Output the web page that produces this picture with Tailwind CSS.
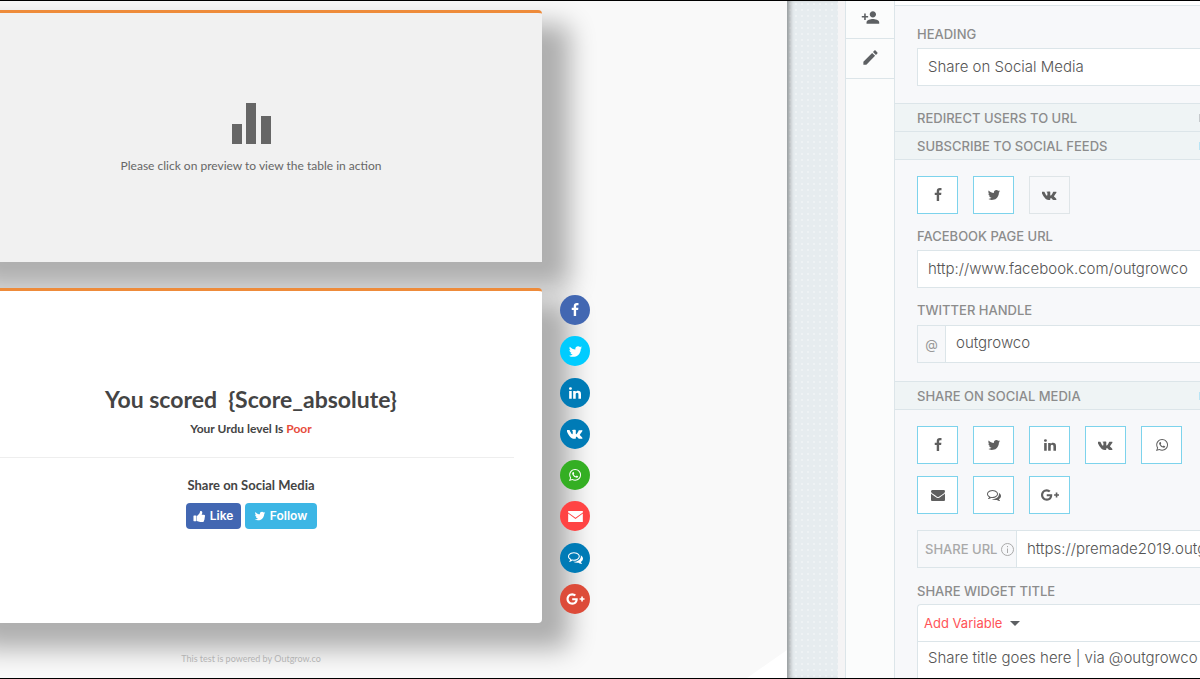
<!DOCTYPE html>
<html lang="en">
<head>
<meta charset="utf-8">
<title>Quiz builder</title>
<script src="https://cdn.jsdelivr.net/npm/@tailwindcss/browser@4"></script>
</head>
<body class="bg-black">
<svg class="hidden" aria-hidden="true">
  <symbol id="facebook" viewBox="0 0 1792 1792"><path d="M1343 12v264h-157q-86 0-116 36t-30 108v189h293l-39 296h-254v759h-306v-759h-255v-296h255v-218q0-186 104-288.5t277-102.5q147 0 228 12z"/></symbol>
  <symbol id="twitter" viewBox="0 0 1792 1792"><path d="M1684 408q-67 98-162 167 1 14 1 42 0 130-38 259.5t-115.5 248.5-184.5 210.5-258 146-323 54.5q-271 0-496-145 35 4 78 4 225 0 401-138-105-2-188-64.5t-114-159.5q33 5 61 5 43 0 85-11-112-23-185.5-111.5t-73.5-205.5v-4q68 38 146 41-66-44-105-115t-39-154q0-88 44-163 121 149 294.5 238.5t371.5 99.5q-8-38-8-74 0-134 94.5-228.5t228.5-94.5q140 0 236 102 109-21 205-78-37 115-142 178 93-10 186-50z"/></symbol>
  <symbol id="linkedin" viewBox="0 0 1792 1792"><path d="M477 625v991h-330v-991h330zm21-306q1 73-50.5 122t-135.5 49h-2q-82 0-132-49t-50-122q0-74 51.5-122.5t134.5-48.5 133 48.5 51 122.5zm1166 729v568h-329v-530q0-105-40.5-164.5t-126.5-59.5q-63 0-105.5 34.5t-63.5 85.5q-11 30-11 81v553h-329q2-399 2-647t-1-296l-1-48h329v144h-2q20-32 41-56t56.5-52 87-43.5 114.5-15.5q171 0 275 113.5t104 332.5z"/></symbol>
  <symbol id="vk" viewBox="0 0 1920 1792"><path d="M1853 520q23 64-150 294-24 32-65 85-78 100-90 131-17 41 14 81 17 21 81 82h1l1 1 1 1 2 2q141 131 191 221 3 5 6.5 12.5t7 26.5-.5 34-25 27.5-59 12.5l-256 4q-24 5-56-5t-52-22l-20-12q-30-21-70-64t-68.5-77.5-61-58-56.5-15.5q-3 1-8 3.5t-17 14.5-21.5 29.5-17 52-6.5 77.5q0 15-3.5 27.5t-7.5 18.5l-4 5q-18 19-53 22h-115q-71 4-146-16.5t-131.5-53-103-66-70.5-57.5l-25-24q-10-10-27.5-30t-71.5-91-106-151-122.5-211-130.5-272q-6-16-6-27t3-16l4-6q15-19 57-19l274-2q12 2 23 6.5t16 8.5l5 3q16 11 24 32 20 50 46 103.5t41 81.5l16 29q29 60 56 104t48.5 68.5 41.5 38.5 34 14 27-5q2-1 5-5t12-22 13.5-47 9.5-81 0-125q-2-40-9-73t-14-46l-6-12q-25-34-85-43-13-2 5-24 16-19 38-30 53-26 239-24 82 1 135 13 20 5 33.5 13.5t20.5 24 10.5 32 3.5 45.5-1 55-2.5 70.5-1.5 82.5q0 11-1 42t-.5 48 3.5 40.5 11.5 39 22.5 24.5q8 2 17 4t26-11 38-34.5 52-67 68-107.5q60-104 107-225 4-10 10-17.5t11-10.5l4-3 5-2.5 13-3 20-.5 288-2q39-5 64 2.5t31 16.5z"/></symbol>
  <symbol id="whatsapp" viewBox="0 0 1792 1792"><path d="M1113 974q13 0 97.5 44t89.5 53q2 5 2 15 0 33-17 76-16 39-71 65.5t-102 26.5q-57 0-190-62-98-45-170-118t-148-185q-72-107-71-194v-8q3-91 74-158 24-22 52-22 6 0 18 1.5t19 1.5q19 0 26.5 6.5t15.5 27.5q8 20 33 88t25 75q0 21-34.5 57.5t-34.5 46.5q0 7 5 15 34 73 102 137 56 53 151 101 12 7 22 7 15 0 54-48.5t52-48.5zm-203 530q127 0 243.5-50t200.5-134 134-200.5 50-243.5-50-243.5-134-200.5-200.5-134-243.5-50-243.5 50-200.5 134-134 200.5-50 243.5q0 203 120 368l-79 233 242-77q158 104 345 104zm0-1382q153 0 292.5 60t240.5 161 161 240.5 60 292.5-60 292.5-161 240.5-240.5 161-292.5 60q-195 0-365-94l-417 134 136-405q-108-178-108-389 0-153 60-292.5t161-240.5 240.5-161 292.5-60z"/></symbol>
  <symbol id="envelope" viewBox="0 0 1792 1792"><path d="M1792 710v794q0 66-47 113t-113 47h-1472q-66 0-113-47t-47-113v-794q44 49 101 87 362 246 497 345 57 42 92.5 65.5t94.5 48 110 24.5h2q51 0 110-24.5t94.5-48 92.5-65.5q170-123 498-345 57-39 100-87zm0-294q0 79-49 151t-122 123q-376 261-468 325-10 7-42.5 30.5t-54 38-52 32.5-57.5 27-50 9h-2q-23 0-50-9t-57.5-27-52-32.5-54-38-42.5-30.5q-91-64-262-182.5t-205-142.5q-62-42-117-115.5t-55-136.5q0-78 41.5-130t118.5-52h1472q65 0 112.5 47t47.5 113z"/></symbol>
  <symbol id="mail" viewBox="0 0 16 12"><path d="M0 0h16v1.500L8 7.300 0 1.500zM0 2.800 8 8.600l8-5.800V12H0z"/></symbol>
  <symbol id="comments" viewBox="0 0 1792 1792"><path d="M704 384q-153 0-286 52t-211.500 141-78.500 191q0 82 53 158t149 132l97 56-35 84q34-20 62-39l44-31 53 10q78 14 153 14 153 0 286-52t211.500-141 78.500-191-78.500-191-211.500-141-286-52zm0-128q191 0 353.500 68.500t256.500 186.500 94 257-94 257-256.500 186.500-353.500 68.500q-86 0-176-16-124 88-278 128-36 9-86 16h-3q-11 0-20.500-8t-11.500-21q-1-3-1-6.500t.5-6.500 2-6l2.500-5 3.500-5.500 4-5 4.500-5 4-4.500q5-6 23-25t26-29.500 22.500-29 25-38.500 20.500-44q-124-72-195-177t-71-224q0-139 94-257t256.500-186.500 353.500-68.500zm822 1169q10 24 20.500 44t25 38.500 22.500 29 26 29.500 23 25q1 1 4 4.500t4.500 5 4 5 3.500 5.500l2.500 5 2 6 .5 6.500-1 6.500q-3 14-13 22t-22 7q-50-7-86-16-154-40-278-128-90 16-176 16-271 0-472-132 58 4 88 4 161 0 309-45t264-129q125-92 192-212t67-254q0-77-23-152 129 71 204 178t75 230q0 120-71 224.500t-195 176.500z"/></symbol>
  <symbol id="gplus" viewBox="0 0 2304 1792"><path d="M1437 913q0 208-87 370.500t-248 254-369 91.500q-149 0-285-58t-234-156-156-234-58-285 58-285 156-234 234-156 285-58q286 0 491 192l-199 191q-117-113-292-113-123 0-227.500 62t-165.500 168.500-61 232.500 61 232.500 165.500 168.500 227.500 62q83 0 152.500-23t114.500-57.500 78.500-78.500 49-83 21.500-74h-416v-252h692q12 63 12 122zm867-122v210h-209v209h-210v-209h-209v-210h209v-209h210v209h209z"/></symbol>
  <symbol id="thumb" viewBox="0 0 1792 1792"><path d="M480 832v640q0 26-19 45t-45 19h-288q-26 0-45-19t-19-45v-640q0-26 19-45t45-19h288q26 0 45 19t19 45zm1184 0q0 86-55 149 15 44 15 76 3 76-43 137 17 56 0 117-15 57-54 94 9 112-49 181-64 76-197 78h-129q-66 0-144-15.500t-121.500-29-120.500-39.500q-123-43-158-44-26-1-45-19.500t-19-44.500v-641q0-25 18-43.500t43-20.500q24-2 76-59t101-121q68-87 101-120 18-18 31-48t17.500-48.500 13.500-60.500q7-39 12.500-61t19.500-52 34-50q19-19 45-19 46 0 82.500 10.500t60 26 40 40.500 24 45 12 50 5 45 .5 39q0 38-9.500 76t-19 60-27.500 56q-3 6-10 18t-11 22-8 24h277q78 0 135 57t57 135z"/></symbol>
</svg>

<div class="flex h-screen overflow-hidden border-y border-black font-['Inter',sans-serif]">

  <!-- Quiz preview -->
  <main class="relative z-10 flex min-w-0 flex-1 flex-col overflow-hidden bg-[#f9f9f9] pt-[9px] font-['Lato','Open_Sans',sans-serif]">
    <div class="absolute right-0 bottom-0 h-7 w-10 bg-white [clip-path:polygon(100%_0,100%_100%,0_100%)]"></div>
    <div class="mr-[245px] -ml-10">
      <section class="flex h-[252px] flex-col items-center rounded-t-sm border-t-3 border-[#ee8b3a] bg-[#f1f1f1] pt-[90px] shadow-[22px_20px_26px_6px_rgba(0,0,0,0.3)]">
        <svg class="h-[42px] w-10 fill-[#666]" viewBox="0 0 40 42"><path d="M1 21h10v20H1zM15 0h10v41H15zM30 13h10v28H30z"/></svg>
        <p class="mt-[11px] text-[12px] leading-5 text-[#666]">Please click on preview to view the table in action</p>
      </section>
    </div>
    <div class="mt-[26px] mr-[197px] -ml-10 flex gap-[18px]">
      <section class="flex h-[335px] flex-1 flex-col items-center rounded-sm border-t-3 border-[#ee8b3a] bg-white pt-[92px] text-[#444] shadow-[22px_20px_26px_6px_rgba(0,0,0,0.3)]">
        <h1 class="text-[23px] leading-8 font-bold whitespace-pre">You scored  {Score_absolute}</h1>
        <p class="mt-1 text-[12px] leading-5 font-bold">Your Urdu level Is <span class="text-[#e74c3c]">Poor</span></p>
        <div class="mt-[18px] w-full pr-7"><hr class="border-[#eee]"></div>
        <h2 class="mt-[17px] text-[13px] leading-5 font-bold">Share on Social Media</h2>
        <div class="mt-2 flex gap-1 font-['Inter',sans-serif] text-[12px] font-semibold text-white">
          <button class="flex h-[26px] w-[55px] items-center justify-center gap-1 rounded-sm bg-[#4267b2]"><svg class="size-[13px] fill-current"><use href="#thumb"/></svg>Like</button>
          <button class="flex h-[26px] w-[72px] items-center justify-center gap-1 rounded-sm bg-[#3cb6e5]"><svg class="size-3 fill-current"><use href="#twitter"/></svg>Follow</button>
        </div>
      </section>
      <nav aria-label="Share" class="relative flex w-[30px] flex-col justify-between pt-[7px] pb-[9px] *:flex *:size-[30px] *:items-center *:justify-center *:rounded-full *:text-white">
        <button aria-label="Facebook" class="bg-[#4267b2]"><svg class="size-[14px] fill-current"><use href="#facebook"/></svg></button>
        <button aria-label="Twitter" class="bg-[#00ccff]"><svg class="size-[15px] fill-current"><use href="#twitter"/></svg></button>
        <button aria-label="LinkedIn" class="bg-[#007bb6]"><svg class="size-[14px] fill-current"><use href="#linkedin"/></svg></button>
        <button aria-label="VK" class="bg-[#007bb6]"><svg class="h-[15px] w-4 fill-current"><use href="#vk"/></svg></button>
        <button aria-label="WhatsApp" class="bg-[#34af23]"><svg class="size-[14px] fill-current"><use href="#whatsapp"/></svg></button>
        <button aria-label="Email" class="bg-[#ff4444]"><svg class="h-[11px] w-[15px] fill-current"><use href="#mail"/></svg></button>
        <button aria-label="SMS" class="bg-[#007bb6]"><svg class="size-[15px] fill-current"><use href="#comments"/></svg></button>
        <button aria-label="Google Plus" class="bg-[#dd4b39]"><svg class="h-[14px] w-[19px] fill-current"><use href="#gplus"/></svg></button>
      </nav>
    </div>
    <footer class="relative mt-[26px] mr-[245px] -ml-10 text-center text-[9px] leading-5 text-[#b3b3b3]">This test is powered by Outgrow.co</footer>
  </main>

  <!-- Builder canvas edge -->
  <div class="w-[51px] shrink-0 bg-[#e6ecef] bg-[radial-gradient(circle,#eef2f4_1px,transparent_1px)] bg-size-[6px_6px] shadow-[inset_5px_0_4px_-2px_rgba(0,0,0,0.35)]"></div>
  <div class="w-[7px] shrink-0 bg-[#f5f4f5]"></div>

  <!-- Tool rail -->
  <nav aria-label="Tools" class="w-[50px] shrink-0 border-x border-[#dce5e9] bg-[#fbfcfc]">
    <button aria-label="Add user" class="flex h-[38px] w-full items-center justify-center border-b border-[#dce5e9]"><svg class="mb-1 size-[19px] fill-[#5d6063]" viewBox="0 0 24 24"><path d="M15 12c2.210 0 4-1.790 4-4s-1.790-4-4-4-4 1.790-4 4 1.790 4 4 4zm-9-2V7H4v3H1v2h3v3h2v-3h3v-2H6zm9 4c-2.670 0-8 1.340-8 4v2h16v-2c0-2.660-5.330-4-8-4z"/></svg></button>
    <button aria-label="Edit" class="flex h-10 w-full items-center justify-center border-b border-[#dce5e9] pb-[2px]"><svg class="size-[19px] fill-[#5d6063]" viewBox="0 0 24 24"><path d="M3 17.250V21h3.750L17.810 9.940l-3.750-3.750L3 17.250zM20.710 7.040c.39-.39.39-1.020 0-1.410l-2.340-2.340c-.39-.39-1.020-.39-1.410 0l-1.830 1.830 3.750 3.750 1.830-1.830z"/></svg></button>
  </nav>

  <!-- Settings panel -->
  <aside class="w-[305px] shrink-0 overflow-hidden border-t-4 border-white bg-[#f7f8fa] text-[13px] leading-4 font-medium text-[#8c8c8c]">
    <div class="border-t border-[#dce5e9] pt-5 pl-[22px]">
      <label for="heading" class="block">HEADING</label>
      <input id="heading" value="Share on Social Media" class="mt-[6px] block h-[38px] w-full border border-r-0 border-[#dce5e9] bg-white pb-[2px] pl-[10px] text-[15px] font-light text-[#555]">
    </div>
    <h3 class="mt-[17px] flex h-7 items-center justify-between border-t border-[#dce5e9] bg-[#eff4f5] pl-[22px] font-medium">REDIRECT USERS TO URL<span class="h-2 w-px bg-[#c5c9cc]"></span></h3>
    <h3 class="flex h-[29px] items-center justify-between border-y border-[#dce5e9] bg-[#eff4f5] pl-[22px] font-medium">SUBSCRIBE TO SOCIAL FEEDS<span class="h-2 w-px bg-[#b8e4f5]"></span></h3>
    <div class="pt-4 pl-[22px]">
      <div class="flex gap-[15px] text-[#5f5f5f] *:flex *:h-[38px] *:w-[41px] *:items-center *:justify-center *:border">
        <button aria-label="Facebook feed" class="border-[#7dd3ec] bg-white"><svg class="size-[14px] fill-current"><use href="#facebook"/></svg></button>
        <button aria-label="Twitter feed" class="border-[#7dd3ec] bg-white"><svg class="size-[14px] fill-current"><use href="#twitter"/></svg></button>
        <button aria-label="VK feed" class="border-[#dfe5e8]"><svg class="h-[14px] w-[15px] fill-current"><use href="#vk"/></svg></button>
      </div>
      <label for="fb" class="mt-[14px] block">FACEBOOK PAGE URL</label>
      <input id="fb" value="http://www.facebook.com/outgrowco" class="mt-[6px] block h-[38px] w-full border border-r-0 border-[#dce5e9] bg-white pb-[2px] pl-[10px] text-[15px] font-light text-[#555]">
      <label for="tw" class="mt-[14px] block">TWITTER HANDLE</label>
      <div class="mt-[7px] flex h-[38px] border border-r-0 border-[#dce5e9]">
        <span class="flex w-7 items-center justify-center border-r border-[#dce5e9] font-normal text-[#999]">@</span>
        <input id="tw" value="outgrowco" class="min-w-0 flex-1 bg-white pb-[2px] pl-[10px] text-[15px] font-light text-[#555]">
      </div>
    </div>
    <h3 class="mt-[18px] flex h-[29px] items-center justify-between border-y border-[#dce5e9] bg-[#eff4f5] pl-[22px] font-medium">SHARE ON SOCIAL MEDIA<span class="h-2 w-px bg-[#b8e4f5]"></span></h3>
    <div class="pt-4 pl-[22px]">
      <div class="flex flex-wrap gap-x-[15px] gap-y-3 text-[#5f5f5f] *:flex *:h-[38px] *:w-[41px] *:items-center *:justify-center *:border *:border-[#7dd3ec] *:bg-white">
        <button aria-label="Share on Facebook"><svg class="size-[14px] fill-current"><use href="#facebook"/></svg></button>
        <button aria-label="Share on Twitter"><svg class="size-[14px] fill-current"><use href="#twitter"/></svg></button>
        <button aria-label="Share on LinkedIn"><svg class="size-[14px] fill-current"><use href="#linkedin"/></svg></button>
        <button aria-label="Share on VK"><svg class="h-[14px] w-[15px] fill-current"><use href="#vk"/></svg></button>
        <button aria-label="Share on WhatsApp"><svg class="size-[14px] fill-current"><use href="#whatsapp"/></svg></button>
        <button aria-label="Share by email"><svg class="size-[14px] fill-current"><use href="#envelope"/></svg></button>
        <button aria-label="Share by SMS"><svg class="size-[14px] fill-current"><use href="#comments"/></svg></button>
        <button aria-label="Share on Google Plus"><svg class="h-[14px] w-[18px] fill-current"><use href="#gplus"/></svg></button>
      </div>
      <div class="mt-4 flex h-[38px] border border-r-0 border-[#dce5e9]">
        <label for="url" class="flex w-[99px] shrink-0 items-center gap-1 border-r border-[#dce5e9] pl-[7px] text-[#a9a9a9]">SHARE URL<svg class="size-[13px] shrink-0 fill-none stroke-current" viewBox="0 0 13 13"><circle cx="6.500" cy="6.500" r="6"/><path d="M6.500 5.500v4.500M6.500 3v1.200"/></svg></label>
        <input id="url" value="https://premade2019.outgrow.us" class="min-w-0 flex-1 bg-white pl-[10px] text-[15px] font-light text-[#555]">
      </div>
      <label for="title" class="mt-[15px] block">SHARE WIDGET TITLE</label>
      <div class="mt-[5px] rounded-tl-sm border border-r-0 border-[#dce5e9] bg-white">
        <button class="flex h-9 items-center gap-2 pl-[6px] font-normal text-[#ff5358]">Add Variable<svg class="h-[5px] w-[10px] fill-[#5d6063]" viewBox="0 0 10 5"><path d="M0 0h10L5 5z"/></svg></button>
        <textarea id="title" rows="2" class="block w-full resize-none overflow-hidden border-t border-[#dce5e9] bg-white pt-[6px] pl-[10px] text-[15px] leading-5 font-light whitespace-nowrap text-[#555]">Share title goes here | via @outgrowco</textarea>
      </div>
    </div>
  </aside>
</div>
</body>
</html>
